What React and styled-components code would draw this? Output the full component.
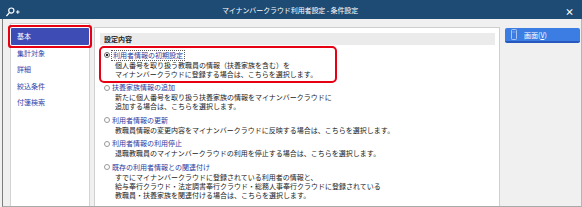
import React from "react";
import styled, { createGlobalStyle } from "styled-components";

const GlobalStyle = createGlobalStyle`
  html, body {
    margin: 0;
    padding: 0;
  }
  body {
    width: 582px;
    height: 207px;
    overflow: hidden;
    background: #f0f0f0;
    font-family: "Noto Sans CJK JP", "Noto Sans", sans-serif;
  }
`;

const menuItems = ["基本", "集計対象", "詳細", "絞込条件", "付箋検索"];

const options = [
    {
        title: "利用者情報の初期設定",
        lines: [
            "個人番号を取り扱う教職員の情報（扶養家族を含む）を",
            "マイナンバークラウドに登録する場合は、こちらを選択します。",
        ],
        checked: true,
    },
    {
        title: "扶養家族情報の追加",
        lines: [
            "新たに個人番号を取り扱う扶養家族の情報をマイナンバークラウドに",
            "追加する場合は、こちらを選択します。",
        ],
    },
    {
        title: "利用者情報の更新",
        lines: ["教職員情報の変更内容をマイナンバークラウドに反映する場合は、こちらを選択します。"],
    },
    {
        title: "利用者情報の利用停止",
        lines: ["退職教職員のマイナンバークラウドの利用を停止する場合は、こちらを選択します。"],
    },
    {
        title: "既存の利用者情報との関連付け",
        lines: [
            "すでにマイナンバークラウドに登録されている利用者の情報と、",
            "給与奉行クラウド・法定調書奉行クラウド・総務人事奉行クラウドに登録されている",
            "教職員・扶養家族を関連付ける場合は、こちらを選択します。",
        ],
    },
];

function SearchPlusIcon() {
    return (
        <svg width="15" height="10" viewBox="0 0 15 10">
            <circle cx="5.3" cy="3.6" r="2.6" fill="none" stroke="#fff" strokeWidth="1.2" />
            <line x1="3.4" y1="5.6" x2="0.8" y2="8.6" stroke="#fff" strokeWidth="1.4" strokeLinecap="round" />
            <line x1="10" y1="5" x2="13.6" y2="5" stroke="#fff" strokeWidth="1" />
            <line x1="11.8" y1="3.2" x2="11.8" y2="6.8" stroke="#fff" strokeWidth="1" />
        </svg>
    );
}

function ScreenIcon() {
    return (
        <svg width="6" height="11" viewBox="0 0 6 11">
            <rect x="0.5" y="0.5" width="5" height="10" rx="0.8" fill="none" stroke="#a8c6f4" strokeWidth="1" />
            <line x1="1.5" y1="3" x2="4.5" y2="3" stroke="#a8c6f4" strokeWidth="0.6" />
        </svg>
    );
}

function App() {
    return (
        <Window>
            <GlobalStyle />
            <TitleBar>
                <TitleIcon>
                    <SearchPlusIcon />
                </TitleIcon>
                <TitleText>マイナンバークラウド利用者設定 - 条件設定</TitleText>
                <CloseButton>×</CloseButton>
            </TitleBar>
            <Body>
                <Sidebar>
                    {menuItems.map((item, i) => (
                        <MenuItem key={item} $active={i === 0}>{item}</MenuItem>
                    ))}
                </Sidebar>
                <Main>
                    <SectionHeader>設定内容</SectionHeader>
                    <OptionList>
                        {options.map((opt) => (
                            <Option key={opt.title} $highlighted={opt.checked}>
                                <OptionTitleRow>
                                    <Radio $checked={opt.checked} />
                                    <OptionLabel $focused={opt.checked}>{opt.title}</OptionLabel>
                                </OptionTitleRow>
                                {opt.lines.map((line) => (
                                    <OptionDesc key={line}>{line}</OptionDesc>
                                ))}
                            </Option>
                        ))}
                    </OptionList>
                </Main>
                <RightColumn>
                    <ScreenButton>
                        <ScreenIcon />
                        <span>画面(<u>V</u>)</span>
                    </ScreenButton>
                </RightColumn>
            </Body>
        </Window>
    );
}

const Window = styled.div`
width: 582px;
height: 207px;
display: flex;
flex-direction: column;
background: #f0f0f0;
overflow: hidden;
`;

const TitleBar = styled.div`
height: 19px;
flex-shrink: 0;
display: grid;
grid-template-columns: 1fr auto 1fr;
align-items: center;
padding: 0 8px 0 6px;
background: #1e4b73;
color: #fff;
font-size: 7px;
`;

const TitleIcon = styled.div`
display: flex;
align-items: center;
padding-top: 2px;
`;

const TitleText = styled.div`
line-height: 19px;
letter-spacing: -0.1px;
`;

const CloseButton = styled.div`
justify-self: end;
font-size: 9px;
font-weight: bold;
line-height: 19px;
padding-top: 2px;
`;

const Body = styled.div`
flex: 1;
display: flex;
margin-left: 2px;
padding: 4px 0 0 7px;
gap: 4px;
border-left: 1px solid #7d7d7d;
border-right: 1px solid #b5b5b5;
border-bottom: 1px solid #a9a9a9;
min-height: 0;
`;

const Sidebar = styled.div`
width: 78px;
flex-shrink: 0;
display: flex;
flex-direction: column;
padding-top: 4px;
background: #fff;
border: 1px solid #d2d2d2;
border-bottom: none;
`;

const MenuItem = styled.div`
height: 16.5px;
line-height: 16.5px;
padding-left: 6px;
font-size: 7px;
color: ${p => (p.$active ? "#fff" : "#2c46ad")};
background: ${p => (p.$active ? "#3e4cb6" : "transparent")};
border-radius: 1px;
box-shadow: ${p => (p.$active ? "0 0 0 1px #fff, 0 0 0 3px #e60012" : "none")};
`;

const Main = styled.div`
width: 395px;
flex-shrink: 0;
margin-top: 4px;
padding: 5px 4px 0 5px;
background: #fff;
border: 1px solid #cfcfcf;
border-bottom: none;
display: flex;
flex-direction: column;
`;

const SectionHeader = styled.div`
height: 12px;
line-height: 12px;
padding-left: 4px;
background: #ebebeb;
font-size: 7px;
font-weight: bold;
color: #222;
`;

const OptionList = styled.div`
display: flex;
flex-direction: column;
gap: 3.5px;
padding: 4.5px 0 0 4px;
`;

const Option = styled.div`
position: relative;
display: flex;
flex-direction: column;

${p => p.$highlighted && `
&::after {
    content: "";
    position: absolute;
    left: -5px;
    top: -3.5px;
    width: 238px;
    height: 37px;
    box-sizing: border-box;
    border: 2.5px solid #e60012;
    border-radius: 5px;
    pointer-events: none;
}
`}
`;

const OptionTitleRow = styled.div`
height: 11px;
display: flex;
align-items: center;
gap: 1px;
`;

const Radio = styled.span`
width: 6px;
height: 6px;
box-sizing: border-box;
border-radius: 50%;
border: 1px solid ${p => (p.$checked ? "#6d6d6d" : "#9a9a9a")};
background: ${p => (p.$checked ? "radial-gradient(circle, #222 0 1.3px, #fff 1.6px)" : "#fff")};
flex-shrink: 0;
`;

const OptionLabel = styled.span`
height: 11px;
box-sizing: border-box;
line-height: 9px;
padding: ${p => (p.$focused ? "0 1px" : "0 1px 0 0")};
border: 1px ${p => (p.$focused ? "dotted #5a5a5a" : "solid transparent")};
font-size: 7px;
color: #2b3a9e;
`;

const OptionDesc = styled.div`
padding-left: 11px;
line-height: 9px;
font-size: 7px;
color: #222;
white-space: nowrap;
`;

const RightColumn = styled.div`
flex: 1;
padding: 5px 0 0 1px;
`;

const ScreenButton = styled.div`
width: 75px;
height: 15px;
box-sizing: border-box;
display: flex;
align-items: center;
gap: 7px;
padding-left: 6px;
background: #3b7de3;
border-bottom: 2px solid #2858bd;
border-radius: 2px;
color: #fff;
font-size: 7px;

u {
    text-decoration-thickness: 0.5px;
}
`;

export default App;
